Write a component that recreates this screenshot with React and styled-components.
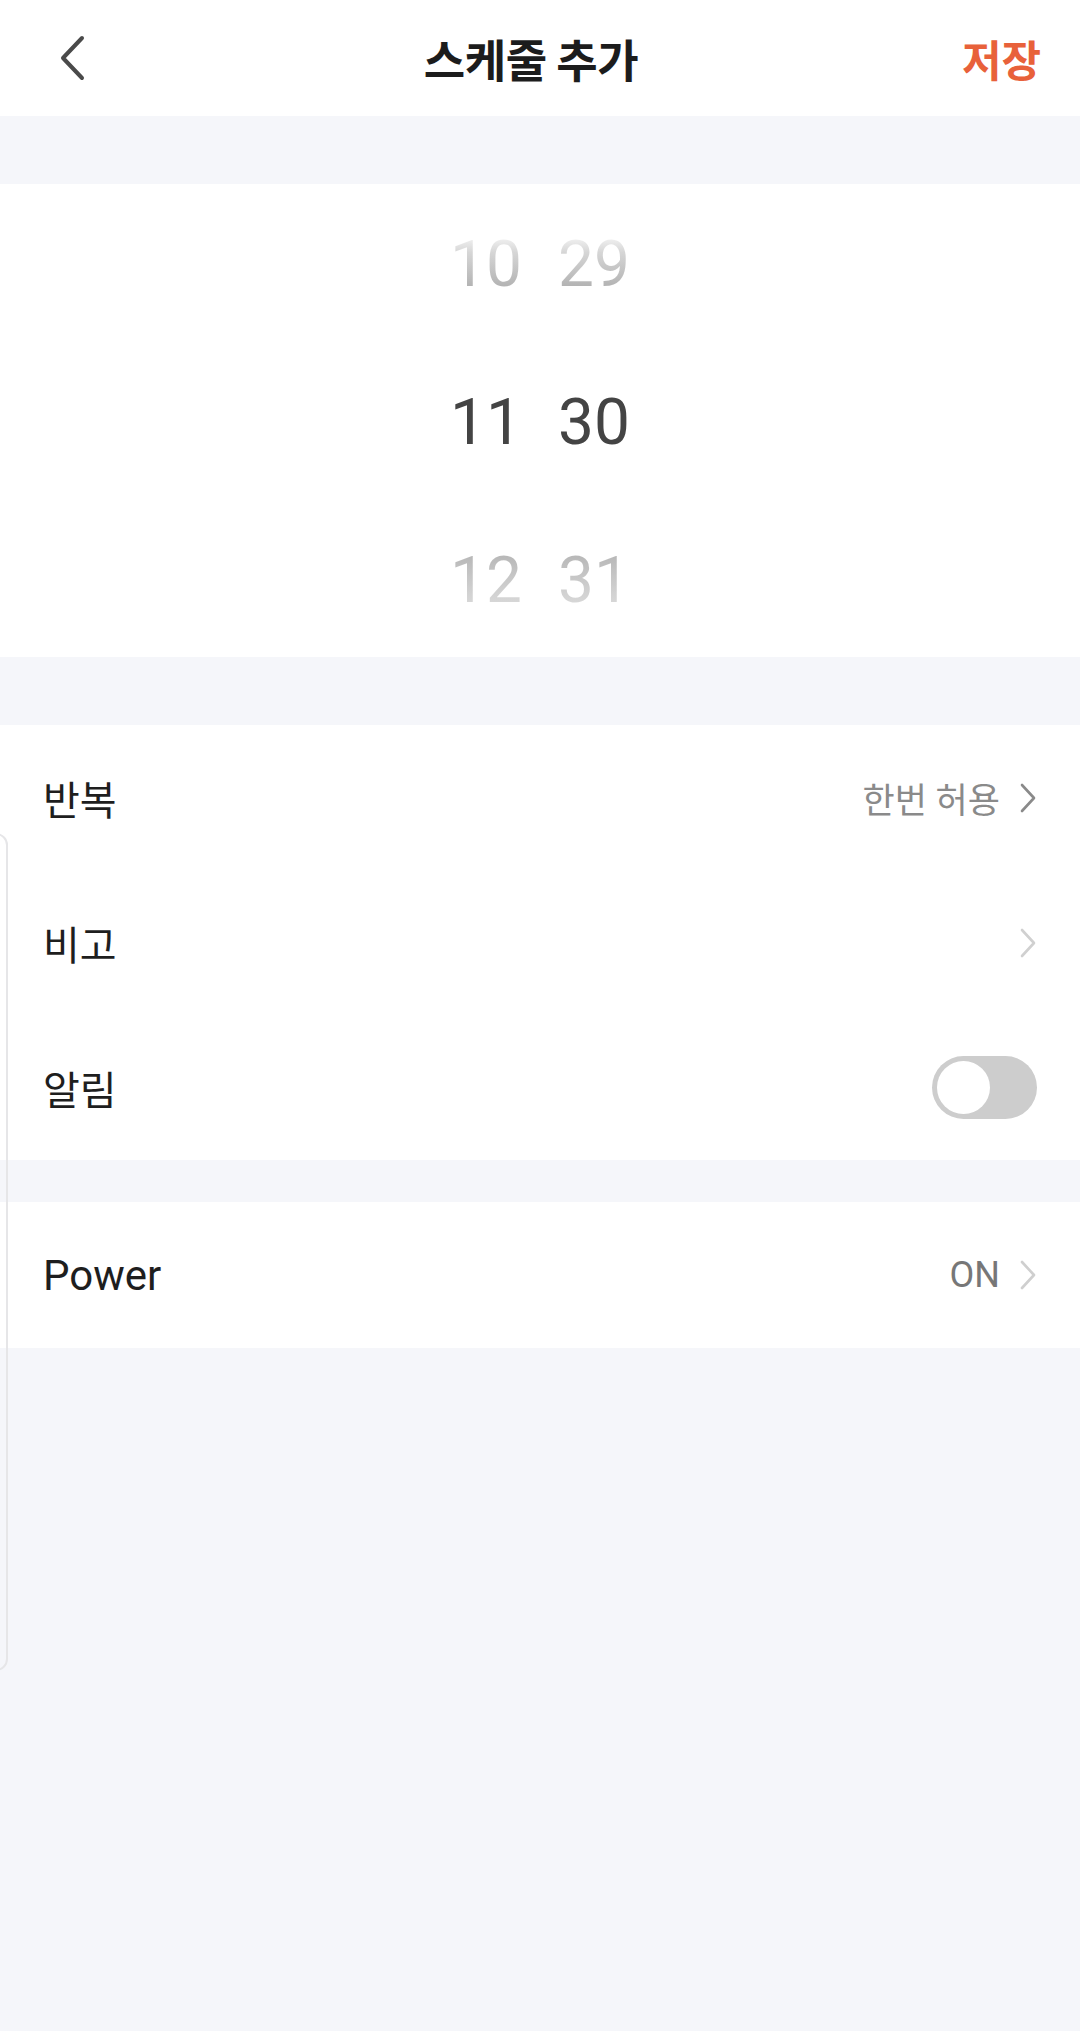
import React from "react";
import styled, { createGlobalStyle } from "styled-components";

const GlobalStyle = createGlobalStyle`
  html, body {
    margin: 0;
    padding: 0;
    background: #f5f6fa;
  }
  body {
    font-family: Roboto, "Noto Sans CJK KR", sans-serif;
    -webkit-font-smoothing: antialiased;
  }
`;

const hours = ["10", "11", "12"];
const minutes = ["29", "30", "31"];

const Chevron = ({ color = "#cccccc" }) => (
  <svg width="18" height="32" viewBox="0 0 18 32" fill="none">
    <path
      d="M3 3 L15 16 L3 29"
      stroke={color}
      strokeWidth="2.6"
      strokeLinecap="round"
      strokeLinejoin="round"
    />
  </svg>
);

const BackIcon = () => (
  <svg width="28" height="46" viewBox="0 0 28 46" fill="none">
    <path
      d="M24 3 L5 23 L24 43"
      stroke="#4a4a4a"
      strokeWidth="4"
      strokeLinecap="round"
      strokeLinejoin="round"
    />
  </svg>
);

const App = () => {
  return (
    <Page>
      <GlobalStyle />
      <Header>
        <BackButton>
          <BackIcon />
        </BackButton>
        <Title>스케줄 추가</Title>
        <SaveButton>저장</SaveButton>
      </Header>

      <Gap $h={68} />

      <Picker>
        <Wheel>
          {hours.map((h, i) => (
            <Digit key={h} $pos={i}>
              {h}
            </Digit>
          ))}
        </Wheel>
        <Wheel>
          {minutes.map((m, i) => (
            <Digit key={m} $pos={i}>
              {m}
            </Digit>
          ))}
        </Wheel>
      </Picker>

      <Gap $h={68} />

      <Card>
        <Row>
          <Label>반복</Label>
          <Trail>
            <Value>한번 허용</Value>
            <Chevron color="#8a8a8a" />
          </Trail>
        </Row>
        <Row>
          <Label>비고</Label>
          <Trail>
            <Chevron color="#d0d0d0" />
          </Trail>
        </Row>
        <Row>
          <Label>알림</Label>
          <Toggle>
            <Knob />
          </Toggle>
        </Row>
      </Card>

      <Gap $h={42} />

      <Card>
        <Row $h={146}>
          <Label $latin>Power</Label>
          <Trail>
            <Value $latin>ON</Value>
            <Chevron color="#cfcfcf" />
          </Trail>
        </Row>
      </Card>

      <EdgeSheet />
    </Page>
  );
};

export default App;

const Page = styled.div`
  position: relative;
  width: 1080px;
  min-height: 2031px;
  background: #f5f6fa;
  overflow: hidden;
`;

const Header = styled.header`
  height: 116px;
  display: flex;
  align-items: center;
  padding: 0 39px 0 40px;
  background: #ffffff;
`;

const BackButton = styled.div`
  width: 60px;
  display: flex;
  align-items: center;
  padding-left: 18px;
  box-sizing: border-box;
`;

const Title = styled.h1`
  flex: 1;
  margin: 0;
  text-align: center;
  font-family: "Noto Sans CJK KR", sans-serif;
  font-size: 45px;
  font-weight: 700;
  color: #1c1c1c;
  letter-spacing: -0.5px;
`;

const SaveButton = styled.div`
  font-family: "Noto Sans CJK KR", sans-serif;
  font-size: 43px;
  font-weight: 700;
  color: #e8613a;
`;

const Gap = styled.div`
  height: ${(p) => p.$h}px;
`;

const Picker = styled.section`
  height: 473px;
  background: #ffffff;
  display: flex;
  justify-content: center;
  gap: 36px;
  padding-top: 2px;
  box-sizing: border-box;
`;

const Wheel = styled.div`
  display: flex;
  flex-direction: column;
  align-items: center;
`;

const Digit = styled.span`
  display: block;
  height: 158px;
  line-height: 158px;
  font-family: Roboto, sans-serif;
  font-size: 64px;
  font-weight: 400;
  color: #444444;
  ${(p) =>
    p.$pos === 0 &&
    `
    background: linear-gradient(to bottom, #ffffff 0%, #ffffff 28%, #d6d6d6 42%, #acacac 68%, #ffffff 72%);
    -webkit-background-clip: text;
    background-clip: text;
    color: transparent;
  `}
  ${(p) =>
    p.$pos === 2 &&
    `
    background: linear-gradient(to bottom, #ffffff 28%, #b6b6b6 32%, #d2d2d2 58%, #dddddd 72%);
    -webkit-background-clip: text;
    background-clip: text;
    color: transparent;
  `}
`;

const Card = styled.section`
  background: #ffffff;
`;

const Row = styled.div`
  height: ${(p) => p.$h || 145}px;
  display: flex;
  align-items: center;
  justify-content: space-between;
  padding: 0 43px 0 43px;
`;

const Label = styled.span`
  font-family: Roboto, "Noto Sans CJK KR", sans-serif;
  font-size: ${(p) => (p.$latin ? 42 : 40)}px;
  color: #1e1e1e;
`;

const Trail = styled.div`
  display: flex;
  align-items: center;
  gap: 19px;
`;

const Value = styled.span`
  font-family: Roboto, "Noto Sans CJK KR", sans-serif;
  font-size: ${(p) => (p.$latin ? 36 : 35)}px;
  color: ${(p) => (p.$latin ? "#777777" : "#8a8a8a")};
`;

const Toggle = styled.div`
  width: 105px;
  height: 63px;
  border-radius: 32px;
  background: #cdcdcd;
  display: flex;
  align-items: center;
  padding: 0 5px;
  box-sizing: border-box;
`;

const Knob = styled.div`
  width: 53px;
  height: 53px;
  border-radius: 50%;
  background: #ffffff;
`;

const EdgeSheet = styled.div`
  position: absolute;
  left: -22px;
  top: 833px;
  width: 30px;
  height: 838px;
  border: 2px solid #e6e6e8;
  border-radius: 12px;
  box-sizing: border-box;
  pointer-events: none;
`;
